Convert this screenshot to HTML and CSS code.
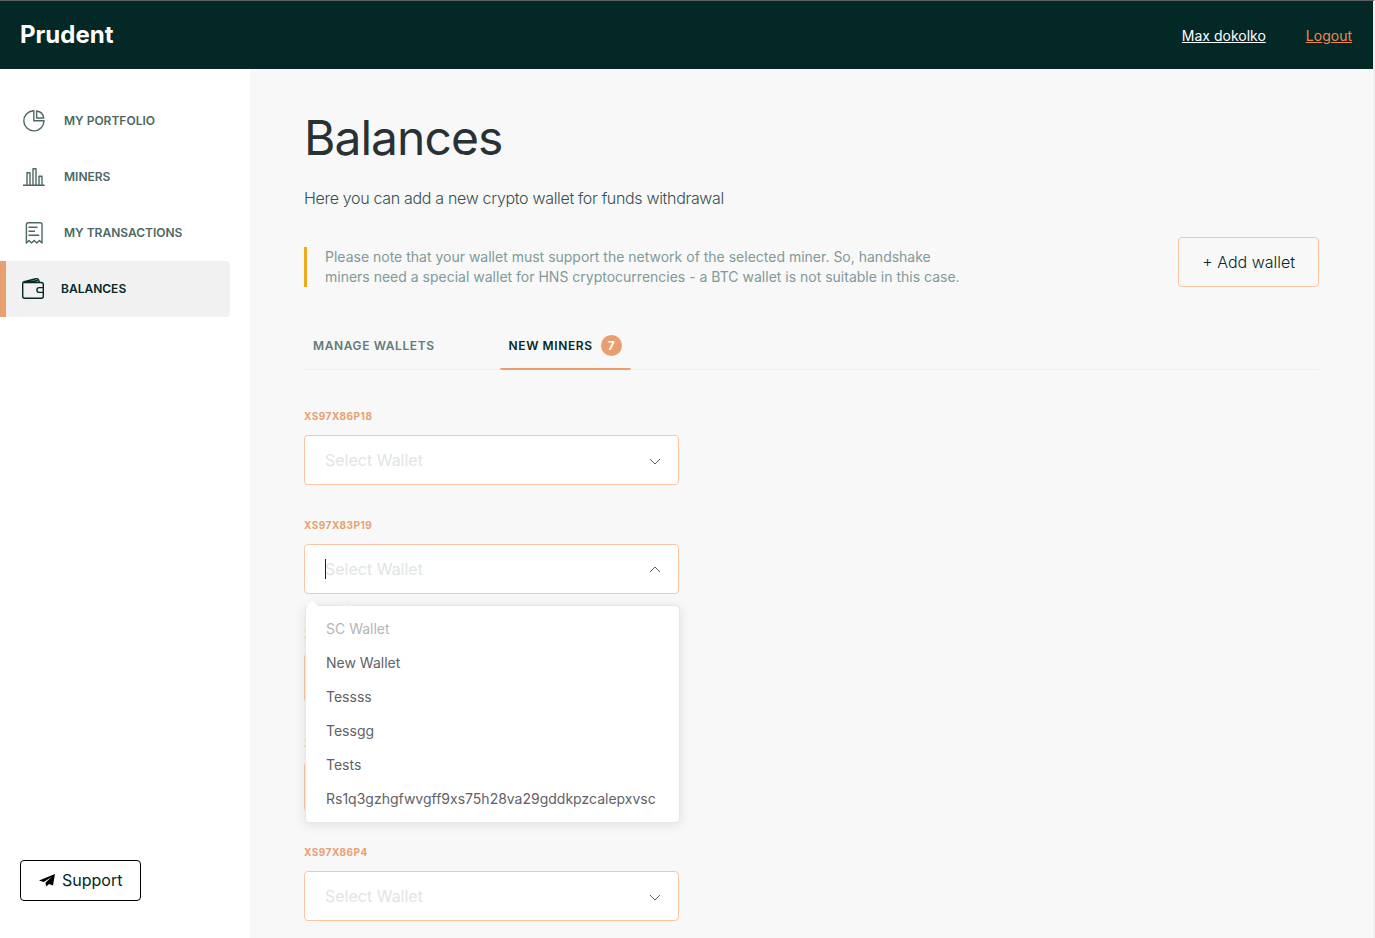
FILE: index.html
```html
<!DOCTYPE html>
<html lang="en">

<head>
    <meta charset="UTF-8">
    <meta name="viewport" content="width=device-width, initial-scale=1.0">
    <title>Prudent - Balances</title>
    <link rel="stylesheet" href="styles.css">
</head>

<body>
    <header class="header">
        <a class="logo" href="#">Prudent</a>
        <div class="user-links">
            <a class="user-name" href="#">Max dokolko</a>
            <a class="logout" href="#">Logout</a>
        </div>
    </header>

    <div class="layout">
        <aside class="sidebar">
            <nav class="menu">
                <a class="menu-item" href="#">
                    <svg class="menu-icon" viewBox="0 0 24 24">
                        <path d="M11.3 2.7A10.1 10.1 0 1 0 22 13V12.8H11.8V2.7Z" />
                        <path d="M14.6 3V10H21.7C21.2 6.2 18.4 3.4 14.6 3Z" />
                    </svg>
                    My portfolio
                </a>
                <a class="menu-item" href="#">
                    <svg class="menu-icon" viewBox="0 0 24 24">
                        <path d="M1 21.2H22.7M5 21V8.7H8V21M11 21V4.7H14V21M17 21V12.2H20V21" />
                    </svg>
                    Miners
                </a>
                <a class="menu-item" href="#">
                    <svg class="menu-icon" viewBox="0 0 24 24">
                        <path d="M4.4 23V4.8Q4.4 2.7 6.5 2.7H18Q20 2.7 20 4.8V23L17.4 20.6L14.8 23L12.2 20.6L9.6 23L7 20.6Z" />
                        <path d="M6.5 7.3H15.5M6.5 11.3H13M6.5 15.3H17.2" />
                    </svg>
                    My transactions
                </a>
                <a class="menu-item active" href="#">
                    <svg class="menu-icon" viewBox="0 0 24 24">
                        <path d="M3 6.5H20.3Q22.3 6.5 22.3 8.5V20.3Q22.3 22.3 20.3 22.3H3.7Q1.7 22.3 1.7 20.3V7.5Q1.7 6.2 3.2 5.8L14.8 2.8Q17 2.3 17.6 4L18.4 6.3M7 6.3L16.8 4.5" />
                        <path d="M22.3 11.6H18.2Q15.9 11.6 15.9 14T18.2 16.4H22.3" />
                    </svg>
                    Balances
                </a>
            </nav>
            <button class="support" type="button">
                <svg class="support-icon" viewBox="0 0 16 14">
                    <path d="M0 7.5L16 1L14 12.6L10 11L7.3 13.4L6.4 9.8L12.5 4L4.8 8.9Z" />
                </svg>
                Support
            </button>
        </aside>

        <main class="content">
            <h1>Balances</h1>
            <p class="lead">Here you can add a new crypto wallet for funds withdrawal</p>

            <div class="notice-row">
                <p class="notice">Please note that your wallet must support the network of the selected miner. So, handshake miners need a special wallet for HNS cryptocurrencies - a BTC wallet is not suitable in this case.</p>
                <button class="add-wallet" type="button">+ Add wallet</button>
            </div>

            <div class="tabs" role="tablist">
                <button class="tab" type="button" role="tab" aria-selected="false">Manage wallets</button>
                <button class="tab active" type="button" role="tab" aria-selected="true">New miners <span class="badge">7</span></button>
            </div>

            <form class="miners">
                <div class="field">
                    <label for="miner-1">XS97X86P18</label>
                    <div class="select-box">
                        <select id="miner-1">
                            <option>Select Wallet</option>
                        </select>
                        <svg class="arrow" viewBox="0 0 12 12"><path d="M1 4L6 9L11 4" /></svg>
                    </div>
                </div>

                <div class="field">
                    <label for="miner-2">XS97X83P19</label>
                    <div class="select-box open">
                        <input id="miner-2" type="text" role="combobox" aria-expanded="true" aria-controls="wallet-list" placeholder="Select Wallet">
                        <svg class="arrow" viewBox="0 0 12 12"><path d="M1 8L6 3L11 8" /></svg>
                        <ul class="dropdown" id="wallet-list" role="listbox">
                            <li class="disabled" role="option" aria-disabled="true">SC Wallet</li>
                            <li role="option">New Wallet</li>
                            <li role="option">Tessss</li>
                            <li role="option">Tessgg</li>
                            <li role="option">Tests</li>
                            <li role="option">Rs1q3gzhgfwvgff9xs75h28va29gddkpzcalepxvsc</li>
                        </ul>
                    </div>
                </div>

                <div class="field">
                    <label for="miner-3">XS97X86P2</label>
                    <div class="select-box">
                        <select id="miner-3">
                            <option>Select Wallet</option>
                        </select>
                        <svg class="arrow" viewBox="0 0 12 12"><path d="M1 4L6 9L11 4" /></svg>
                    </div>
                </div>

                <div class="field">
                    <label for="miner-4">XS97X86P3</label>
                    <div class="select-box">
                        <select id="miner-4">
                            <option>Select Wallet</option>
                        </select>
                        <svg class="arrow" viewBox="0 0 12 12"><path d="M1 4L6 9L11 4" /></svg>
                    </div>
                </div>

                <div class="field">
                    <label for="miner-5">XS97X86P4</label>
                    <div class="select-box">
                        <select id="miner-5">
                            <option>Select Wallet</option>
                        </select>
                        <svg class="arrow" viewBox="0 0 12 12"><path d="M1 4L6 9L11 4" /></svg>
                    </div>
                </div>
            </form>
        </main>
    </div>
</body>

</html>
```

FILE: styles.css
```css
* {
    box-sizing: border-box;
}

body {
    font-family: 'Inter', sans-serif;
    display: flex;
    flex-direction: column;
    min-height: 100vh;
    margin: 0;
    border-top: 1px solid #5f6163;
    border-right: 2px solid #f1f1f1;
    background-color: #f8f8f8;
    color: #042825;
}

button,
input,
select {
    font-family: inherit;
    color: inherit;
}

.header {
    display: flex;
    justify-content: space-between;
    align-items: center;
    height: 68px;
    padding: 0 21px 0 20px;
    background-color: #042825;
}

.logo {
    padding-bottom: 2px;
    font-size: 24px;
    font-weight: 700;
    color: #ffffff;
    text-decoration: none;
}

.user-links {
    display: flex;
    gap: 40px;
    font-size: 14px;
}

.user-name {
    color: #ffffff;
}

.logout {
    color: #ec8a58;
}

.layout {
    display: flex;
    flex: 1;
}

/* Sidebar */
.sidebar {
    display: flex;
    flex-direction: column;
    justify-content: space-between;
    align-items: flex-start;
    flex: 0 0 250px;
    padding: 24px 20px 37px 0;
    background-color: #ffffff;
}

.menu {
    width: 100%;
}

.menu-item {
    display: flex;
    align-items: center;
    gap: 18px;
    height: 56px;
    padding: 0 0 2px 22px;
    font-size: 12px;
    font-weight: 600;
    text-transform: uppercase;
    text-decoration: none;
    color: #4d6765;
}

.menu-item.active {
    gap: 16px;
    padding-left: 15px;
    border-left: 6px solid #e99e70;
    border-radius: 0 4px 4px 0;
    background-color: #f1f1f1;
    color: #042825;
}

.menu-icon {
    width: 24px;
    height: 24px;
    fill: none;
    stroke: currentColor;
    stroke-width: 1.4;
    stroke-linejoin: round;
}

.support {
    display: flex;
    align-items: center;
    gap: 7px;
    height: 41px;
    margin-left: 20px;
    padding: 0 18px 2px;
    border: 1px solid #000000;
    border-radius: 4px;
    background-color: #ffffff;
    font-size: 16px;
}

.support-icon {
    width: 16px;
    height: 14px;
    fill: #000000;
}

/* Content */
.content {
    flex: 1;
    padding: 40px 54px 17px;
}

h1 {
    margin: 0;
    font-size: 48px;
    font-weight: 400;
    line-height: 58px;
    letter-spacing: -0.02em;
    color: #283235;
}

.lead {
    margin: 19px 0 27px;
    font-size: 16px;
    font-weight: 300;
    line-height: 24px;
    letter-spacing: -0.02em;
    color: #364f4f;
}

.notice-row {
    display: flex;
    justify-content: space-between;
    align-items: flex-end;
}

.notice {
    max-width: 664px;
    margin: 0;
    padding-left: 18px;
    border-left: 3px solid #edaa1c;
    font-size: 14px;
    line-height: 20px;
    color: #809a98;
}

.add-wallet {
    height: 50px;
    padding: 0 23px;
    border: 1px solid #fcc5a2;
    border-radius: 4px;
    background-color: transparent;
    font-size: 16px;
    font-weight: 300;
}

.tabs {
    display: flex;
    gap: 56px;
    height: 49px;
    margin-top: 34px;
    border-bottom: 1px solid #eeeeee;
}

.tab {
    display: flex;
    align-items: center;
    gap: 8px;
    height: 49px;
    padding: 2px 9px 0;
    border: 0;
    border-bottom: 2px solid transparent;
    border-radius: 2px;
    background-color: transparent;
    font-size: 12px;
    font-weight: 600;
    letter-spacing: 0.05em;
    text-transform: uppercase;
    color: #5f7c79;
}

.tab.active {
    border-bottom-color: #e99e70;
    color: #042825;
}

.badge {
    width: 21px;
    height: 21px;
    border-radius: 50%;
    background-color: #e99e70;
    font-weight: 700;
    line-height: 21px;
    letter-spacing: 0;
    text-align: center;
    color: #ffffff;
}

.miners {
    display: grid;
    gap: 33px;
    max-width: 375px;
    margin-top: 39px;
}

.field label {
    display: block;
    margin-bottom: 12px;
    font-size: 10px;
    font-weight: 700;
    line-height: 14px;
    letter-spacing: 0.05em;
    color: #e99e70;
}

.select-box {
    position: relative;
}

.select-box select,
.select-box input {
    display: block;
    width: 100%;
    height: 50px;
    padding: 0 40px 0 20px;
    border: 1px solid #fcc5a2;
    border-radius: 4px;
    outline: none;
    appearance: none;
    background-color: #ffffff;
    font-size: 16px;
    color: #e0e5e5;
}

.select-box input::placeholder {
    color: #e0e5e5;
}

/* text cursor of the focused box */
.select-box.open::before {
    content: "";
    position: absolute;
    top: 15px;
    left: 21px;
    width: 1px;
    height: 20px;
    background-color: #042825;
}

.arrow {
    position: absolute;
    top: 20px;
    right: 18px;
    width: 12px;
    height: 12px;
    fill: none;
    stroke: #4d6765;
    pointer-events: none;
}

.dropdown {
    position: absolute;
    z-index: 1;
    top: 61px;
    left: 1px;
    width: 100%;
    margin: 0;
    padding: 6px 0;
    border: 1px solid #e4e7ed;
    border-radius: 4px;
    background-color: #ffffff;
    box-shadow: 0 2px 12px rgba(0, 0, 0, 0.1);
    list-style: none;
    font-size: 14px;
    line-height: 34px;
    color: #606266;
}

.dropdown::before,
.dropdown::after {
    content: "";
    position: absolute;
    bottom: 100%;
    left: 0;
    border: 6px solid transparent;
    border-top-width: 0;
    border-bottom: 5px solid #ffffff;
}

.dropdown::before {
    left: 35px;
    border-bottom-color: #ebeef5;
}

.dropdown li {
    padding: 0 20px;
}

.dropdown .disabled {
    color: #b5b5b5;
}
```
